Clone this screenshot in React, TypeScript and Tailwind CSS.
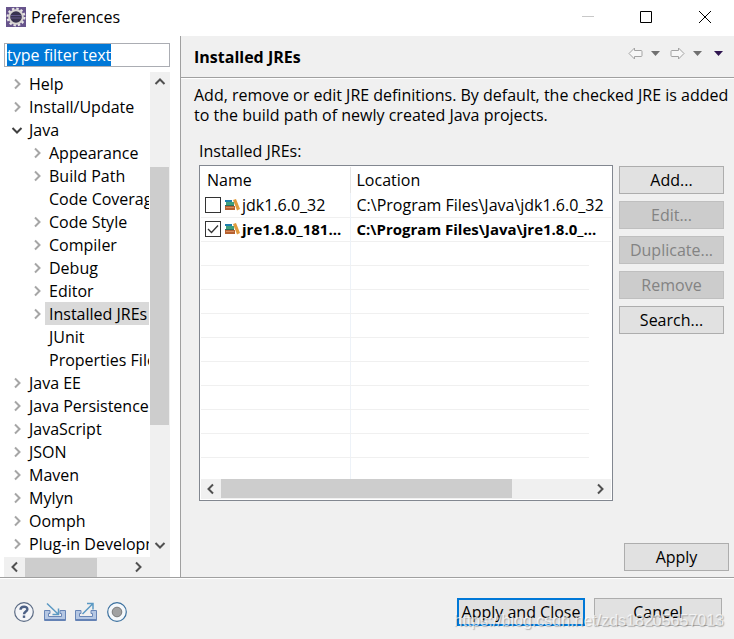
import { useEffect, useRef, useState } from "react";
import clsx from "clsx";

interface TreeItem {
  label: string;
  depth: number;
  state?: "open" | "closed";
}

interface Jre {
  name: string;
  location: string;
}

const treeItems: TreeItem[] = [
  { label: "Help", depth: 0, state: "closed" },
  { label: "Install/Update", depth: 0, state: "closed" },
  { label: "Java", depth: 0, state: "open" },
  { label: "Appearance", depth: 1, state: "closed" },
  { label: "Build Path", depth: 1, state: "closed" },
  { label: "Code Coverage", depth: 1 },
  { label: "Code Style", depth: 1, state: "closed" },
  { label: "Compiler", depth: 1, state: "closed" },
  { label: "Debug", depth: 1, state: "closed" },
  { label: "Editor", depth: 1, state: "closed" },
  { label: "Installed JREs", depth: 1, state: "closed" },
  { label: "JUnit", depth: 1 },
  { label: "Properties Files Editor", depth: 1 },
  { label: "Java EE", depth: 0, state: "closed" },
  { label: "Java Persistence", depth: 0, state: "closed" },
  { label: "JavaScript", depth: 0, state: "closed" },
  { label: "JSON", depth: 0, state: "closed" },
  { label: "Maven", depth: 0, state: "closed" },
  { label: "Mylyn", depth: 0, state: "closed" },
  { label: "Oomph", depth: 0, state: "closed" },
  { label: "Plug-in Development", depth: 0, state: "closed" },
];

const jres: Jre[] = [
  { name: "jdk1.6.0_32", location: "C:\\Program Files\\Java\\jdk1.6.0_32" },
  { name: "jre1.8.0_181...", location: "C:\\Program Files\\Java\\jre1.8.0_..." },
];

const emptyRows = [0, 1, 2, 3, 4, 5, 6, 7, 8];

function Chevron({ className }: { className?: string }) {
  return (
    <svg viewBox="0 0 12 12" fill="none" stroke="currentColor" strokeWidth="2" className={clsx("size-3 shrink-0", className)}>
      <path d="M4 1.5 L8.5 6 L4 10.5" />
    </svg>
  );
}

function EclipseIcon() {
  return (
    <svg viewBox="0 0 20 20" className="size-5">
      <rect width="20" height="20" fill="#67548c" />
      <circle cx="10" cy="10" r="8.4" fill="none" stroke="#e8e6e6" strokeWidth="2.2" strokeDasharray="2.4 2" />
      <circle cx="10" cy="10" r="6.8" fill="#38334f" stroke="#d8d5d2" strokeWidth="2" />
      <path d="M5 8.5h10M4.8 11h10.4" stroke="#62588a" strokeWidth="1.2" />
    </svg>
  );
}

function BooksIcon() {
  return (
    <svg viewBox="0 0 15 12" className="h-3 w-[15px] shrink-0">
      <rect x="0" y="1" width="7" height="2" fill="#1d7fae" />
      <rect x="1" y="3" width="8" height="3" fill="#3f9f7c" />
      <rect x="0" y="6" width="9" height="1" fill="#2b6f62" />
      <rect x="0" y="7" width="10" height="4" fill="#b5602f" />
      <rect x="1" y="8" width="8" height="1" fill="#d88c5c" />
      <path d="M8 1 L11 0 L15 10 L12 11.5 Z" fill="#e09a3c" />
    </svg>
  );
}

function HistoryArrow({ className }: { className?: string }) {
  return (
    <svg viewBox="0 0 15 13" className={clsx("h-[13px] w-[15px]", className)}>
      <path d="M1 6.5 L6.5 1 V3.5 H13 Q14 3.5 14 4.5 V8.5 Q14 9.5 13 9.5 H6.5 V12 Z" fill="#f7f7f7" stroke="#a3a3a3" />
    </svg>
  );
}

function Caret() {
  return (
    <svg viewBox="0 0 9 5" className="h-[5px] w-[9px]" fill="currentColor">
      <path d="M0 0 H9 L4.5 5 Z" />
    </svg>
  );
}

function TrayIcon({ direction }: { direction: "in" | "out" }) {
  return (
    <svg viewBox="0 0 22 20" className="h-5 w-[22px]" fill="none">
      <path d="M.5 8.5 H6 V11.5 H4.5 V14.5 H17.5 V11.5 H16 V8.5 H21.5 V18.5 H.5 Z" fill="#b5c7e3" stroke="#6886b7" />
      <path d="M1 18 H21" stroke="#6482b5" strokeWidth="2" />
      {direction === "in" ? (
        <path d="M3 1.5 L14 12 M14.5 6.5 V12.5 H8.5" stroke="#5b99c3" strokeWidth="1.5" />
      ) : (
        <path d="M7.5 12 L17.5 2 M12 1.5 H18 V7.5" stroke="#5b99c3" strokeWidth="1.5" />
      )}
    </svg>
  );
}

function RecordIcon() {
  return (
    <svg viewBox="0 0 20 20" className="size-5">
      <circle cx="10" cy="10" r="9.3" fill="#f5f8fb" stroke="#3c719f" strokeWidth="1.2" />
      <circle cx="10" cy="10" r="4.8" fill="#a1a1a1" stroke="#7b7b7b" />
    </svg>
  );
}

function HelpIcon() {
  return (
    <svg viewBox="0 0 20 20" className="size-5" fill="none">
      <circle cx="10" cy="10" r="9.3" fill="#f4f5f8" stroke="#5b6b84" strokeWidth="1.2" />
      <path d="M6.5 7.8 C6.5 3.8 13.4 3.8 13.4 7.2 C13.4 9.5 10 9.5 10 12.2" stroke="#4c6085" strokeWidth="2.4" />
      <rect x="8.8" y="13.5" width="2.4" height="2.4" fill="#4c6085" />
    </svg>
  );
}

function PushButton({ label, disabled, primary, className }: { label: string; disabled?: boolean; primary?: boolean; className?: string }) {
  return (
    <button
      disabled={disabled}
      className={clsx(
        "flex h-7 items-center justify-center whitespace-nowrap",
        disabled ? "border border-[#bfbfbf] bg-[#cccccc] text-[#838383]" : "bg-[#e1e1e1] text-black",
        !disabled && (primary ? "border-2 border-[#0078d7]" : "border border-[#adadad]"),
        className
      )}
    >
      {label}
    </button>
  );
}

export default function App() {
  const [filter, setFilter] = useState("type filter text");
  const [selected, setSelected] = useState("Installed JREs");
  const [checked, setChecked] = useState(1);
  const filterRef = useRef<HTMLInputElement>(null);

  useEffect(() => {
    filterRef.current?.select();
  }, []);

  return (
    <div className="flex min-h-screen flex-col bg-[#f0f0f0] font-['Open_Sans','Noto_Sans',sans-serif] text-base leading-5 text-black">
      {/* Title bar */}
      <header className="flex h-9 items-center bg-white pb-0.5 pl-1.5">
        <EclipseIcon />
        <h1 className="flex-1 pl-[5px]">Preferences</h1>
        <button aria-label="Minimize" className="flex h-8 w-[58px] items-center justify-center">
          <svg viewBox="0 0 12 12" className="size-3" stroke="#c8c8c8"><path d="M0 5.5H12" /></svg>
        </button>
        <button aria-label="Maximize" className="flex h-8 w-[58px] items-center justify-center">
          <svg viewBox="0 0 12 12" className="size-3" fill="none" stroke="#000"><path d="M.5 .5H11.5V11.5H.5Z" /></svg>
        </button>
        <button aria-label="Close" className="flex h-8 w-[59px] items-center justify-center">
          <svg viewBox="0 0 12 12" className="size-3" stroke="#000"><path d="M0 0L12 12M12 0L0 12" /></svg>
        </button>
      </header>

      <main className="flex flex-1 border-b border-[#a0a0a0]">
        {/* Page tree */}
        <aside className="w-[180px] shrink-0 bg-white pl-1 pr-2.5 pt-[7px]">
          <input
            ref={filterRef}
            aria-label="Filter text"
            value={filter}
            onChange={(e) => setFilter(e.target.value)}
            className="block h-6 w-full border border-[#abadb3] px-0.5 outline-none selection:bg-[#0078d7] selection:text-white"
          />
          <div className="mt-[5px] flex">
            <nav className="h-[485px] min-w-0 flex-1 overflow-hidden pr-px">
              {treeItems.map((item) => (
                <button
                  key={item.label}
                  onClick={() => setSelected(item.label)}
                  className={clsx("flex h-[23px] w-full items-center overflow-hidden whitespace-nowrap", item.depth ? "pl-[27px]" : "pl-[7px]")}
                >
                  <span className="flex w-3.5 shrink-0">
                    {item.state && (
                      <Chevron className={item.state === "open" ? "rotate-90 text-[#404040]" : "text-[#a6a6a6]"} />
                    )}
                  </span>
                  <span className={clsx("h-[23px] px-1 leading-6", selected === item.label && "bg-[#d9d9d9]")}>
                    {item.label}
                  </span>
                </button>
              ))}
            </nav>
            <div className="flex w-5 flex-col items-center bg-[#f0f0f0] text-[#505050]">
              <button aria-label="Scroll up" className="flex h-5 items-center"><Chevron className="-rotate-90" /></button>
              <div className="mt-[75px] h-[258px] w-full border-r border-[#f0f0f0] bg-[#cdcdcd]" />
              <button aria-label="Scroll down" className="mt-auto flex h-6 items-center"><Chevron className="rotate-90" /></button>
            </div>
          </div>
          <div className="flex h-5 items-center bg-[#f0f0f0] text-[#505050]">
            <button aria-label="Scroll left" className="flex w-[21px] justify-center"><Chevron className="rotate-180" /></button>
            <div className="h-[19px] w-[72px] bg-[#cdcdcd]" />
            <button aria-label="Scroll right" className="ml-auto mr-[22px] flex w-5 justify-center"><Chevron /></button>
          </div>
        </aside>

        {/* Preference page */}
        <section className="flex min-w-0 flex-1 flex-col border-l border-[#a0a0a0]">
          <div className="flex h-[42px] items-center border-b border-[#a0a0a0] pl-[13px] pr-[11px]">
            <h2 className="flex-1 font-bold">Installed JREs</h2>
            <div className="flex items-center gap-2 pb-1.5 text-[#707070]">
              <button aria-label="Back"><HistoryArrow /></button>
              <button aria-label="Back history"><Caret /></button>
              <button aria-label="Forward" className="pl-0.5"><HistoryArrow className="rotate-180" /></button>
              <button aria-label="Forward history"><Caret /></button>
              <button aria-label="View menu" className="pl-1 text-[#2f1550]"><Caret /></button>
            </div>
          </div>
          <p className="border-t border-white pl-[13px] pt-1.5">
            Add, remove or edit JRE definitions. By default, the checked JRE is added to the build path of newly created Java projects.
          </p>

          <div className="pl-[18px] pr-2.5 pt-4">
            <h3>Installed JREs:</h3>
            <div className="mt-1 flex gap-1.5">
              <div className="min-w-0 flex-1 border border-[#828790] bg-white p-px">
                <table className="w-full table-fixed border-collapse text-left">
                  <thead>
                    <tr className="h-[26px]">
                      <th className="w-[149px] border-r border-[#e5e5e5] pl-1.5 font-normal">Name</th>
                      <th className="pl-1.5 font-normal">Location</th>
                      <th className="w-[22px]" />
                    </tr>
                  </thead>
                  <tbody>
                    {jres.map((jre, i) => (
                      <tr key={jre.name} className={clsx("h-6 border-b border-[#f0f0f0]", checked === i && "text-[15px] font-bold")}>
                        <td className="border-r border-[#edf2f8]">
                          <label className="flex items-center whitespace-nowrap pl-1">
                            <input type="checkbox" checked={checked === i} onChange={() => setChecked(i)} className="peer sr-only" />
                            <span className="flex size-4 shrink-0 items-center justify-center border border-[#333] bg-white">
                              {checked === i && (
                                <svg viewBox="0 0 12 12" className="size-3" fill="none" stroke="#333" strokeWidth="1.3"><path d="M1 6L4.5 9.5L11 2.5" /></svg>
                              )}
                            </span>
                            <span className="mr-0.5 pl-1"><BooksIcon /></span>
                            {jre.name}
                          </label>
                        </td>
                        <td colSpan={2} className="whitespace-nowrap pl-1.5">{jre.location}</td>
                      </tr>
                    ))}
                    {emptyRows.map((row) => (
                      <tr key={row} className="h-6">
                        <td className="border-b border-r border-b-[#f0f0f0] border-r-[#edf2f8]" />
                        <td className="border-b border-[#f0f0f0]" />
                        <td />
                      </tr>
                    ))}
                    <tr className="h-[22px]">
                      <td className="border-r border-[#edf2f8]" />
                      <td colSpan={2} />
                    </tr>
                  </tbody>
                </table>
                <div className="flex h-5 items-start bg-[#f0f0f0] text-[#505050]">
                  <button aria-label="Scroll table left" className="flex h-5 w-5 items-center justify-center"><Chevron className="rotate-180" /></button>
                  <div className="h-[19px] w-[291px] bg-[#cdcdcd]" />
                  <button aria-label="Scroll table right" className="ml-auto flex h-5 w-[22px] items-center justify-center"><Chevron /></button>
                </div>
              </div>
              <div className="flex w-[105px] flex-col gap-[7px] pt-px">
                <PushButton label="Add..." />
                <PushButton label="Edit..." disabled />
                <PushButton label="Duplicate..." disabled />
                <PushButton label="Remove" disabled />
                <PushButton label="Search..." />
              </div>
            </div>
          </div>
          <div className="mt-auto flex justify-end pb-1.5 pr-[5px]">
            <PushButton label="Apply" className="w-[105px]" />
          </div>
        </section>
      </main>

      {/* Dialog buttons */}
      <footer className="relative flex h-[61px] items-center border-t border-white pl-3.5 pr-3 pt-1.5">
        <div className="flex items-center gap-2.5 pb-px">
          <button aria-label="Help"><HelpIcon /></button>
          <button aria-label="Import preferences"><TrayIcon direction="in" /></button>
          <button aria-label="Export preferences" className="-ml-px"><TrayIcon direction="out" /></button>
          <button aria-label="Record preferences"><RecordIcon /></button>
        </div>
        <div className="ml-auto flex gap-[9px]">
          <PushButton label="Apply and Close" primary className="w-32" />
          <PushButton label="Cancel" className="w-32" />
        </div>
        <span className="pointer-events-none absolute bottom-2 right-2.5 font-['Liberation_Sans',sans-serif] text-base leading-5 text-white/70 [text-shadow:1px_1px_1px_#00000040]">
          https://blog.csdn.net/zds18205657013
        </span>
      </footer>
    </div>
  );
}
